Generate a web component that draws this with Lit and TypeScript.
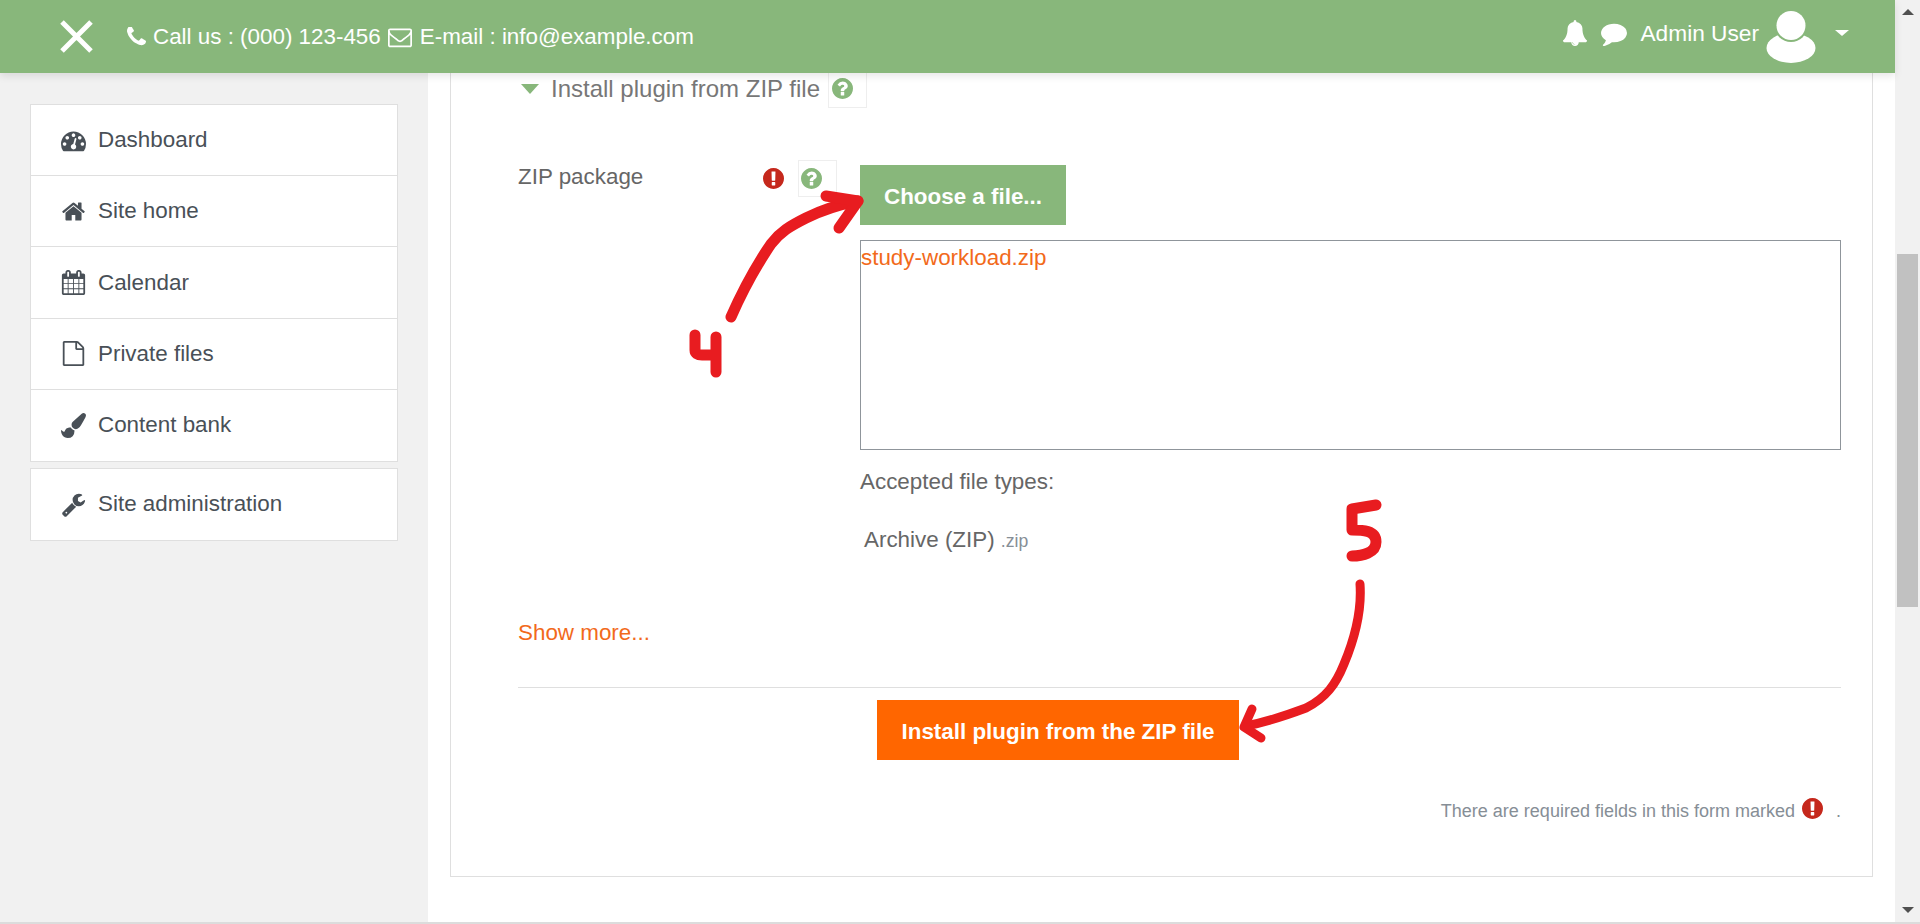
import { LitElement, html, css, svg } from "lit";
import { customElement } from "lit/decorators.js";

// font awesome 4 glyphs, all on the 1792 grid
const icons: Record<string, string> = {
  phone:
    "M1600 1240q0 27-10 70.5t-21 68.5q-21 50-122 106-94 51-186 51-27 0-53-3.5t-57.5-12.5-47-14.5-55.5-20.5-49-18q-98-35-175-83-127-79-264-216t-216-264q-48-77-83-175-3-9-18-49t-20.5-55.5-14.5-47-12.5-57.5-3.5-53q0-92 51-186 56-101 106-122 25-11 68.5-21t70.5-10q14 0 21 3 18 6 53 76 11 19 30 54t35 63.5 31 53.5q3 4 17.5 25t21.5 35.5 7 28.5q0 20-28.5 50t-62 55-62 53-28.5 46q0 9 5 22.5t8.5 20.5 14 24 11.5 19q76 137 174 235t235 174q2 1 19 11.5t24 14 20.5 8.5 22.5 5q18 0 46-28.5t53-62 55-62 50-28.5q14 0 28.5 7t35.5 21.5 25 17.5q25 15 53.5 31t63.5 35 54 30q70 35 76 53 3 7 3 21z",
  envelope:
    "M1664 1504v-768q-32 36-69 66-268 206-426 338-51 43-83 67t-86.5 48.5-102.5 24.5h-2q-48 0-102.5-24.5t-86.5-48.5-83-67q-158-132-426-338-37-30-69-66v768q0 13 9.5 22.5t22.5 9.5h1472q13 0 22.5-9.5t9.5-22.5zm0-1051v-24.5l-.5-13-3-12.5-5.5-9-9-7.5-14-2.5h-1472q-13 0-22.5 9.5t-9.5 22.5q0 168 147 284 193 152 401 317 6 5 35 29.5t46 37.5 44.5 31.5 50.5 27.5 43 9h2q20 0 43-9t50.5-27.5 44.5-31.5 46-37.5 35-29.5q208-165 401-317 54-43 100.5-115.5t46.5-131.5zm128-37v1088q0 66-47 113t-113 47h-1472q-66 0-113-47t-47-113v-1088q0-66 47-113t113-47h1472q66 0 113 47t47 113z",
  bell: "M912 1696q0-16-16-16-59 0-101.5-42.5t-42.5-101.5q0-16-16-16t-16 16q0 73 51.5 124.5t124.5 51.5q16 0 16-16zm816-288q0 52-38 90t-90 38h-448q0 106-75 181t-181 75-181-75-75-181h-448q-52 0-90-38t-38-90q50-42 91-88t85-119.5 74.5-158.5 50-206 19.5-260q0-152 117-282.5t307-158.5q-8-19-8-39 0-40 28-68t68-28 68 28 28 68q0 20-8 39 190 28 307 158.5t117 282.5q0 139 19.5 260t50 206 74.5 158.5 85 119.5 91 88z",
  comment:
    "M1792 896q0 174-120 321.5t-326 233-450 85.5q-70 0-145-8-198 175-460 242-49 14-114 22-17 2-30.5-9t-17.5-29v-1q-3-4-.5-12t2-10 4.5-9.5l6-9 7-8.5 8-9q7-8 31-34.5t34.5-38 31-39.5 32.5-51 27-59 26-76q-157-89-247.5-220t-90.5-281q0-130 71-248.5t191-204.5 286-136.5 348-50.5q244 0 450 85.5t326 233 120 321.5z",
  question:
    "M1024 1376v-192q0-14-9-23t-23-9h-192q-14 0-23 9t-9 23v192q0 14 9 23t23 9h192q14 0 23-9t9-23zm256-672q0-88-55.5-163t-138.5-116-170-41q-243 0-371 213-15 24 8 42l132 100q7 6 19 6 16 0 25-12 53-68 86-92 34-24 86-24 48 0 85.5 26t37.5 59q0 38-20 61t-68 45q-63 28-115.5 86.5t-52.5 125.5v36q0 14 9 23t23 9h192q14 0 23-9t9-23q0-19 21.5-49.5t54.5-49.5q32-18 49-28.5t46-35 44.5-48 28-60.5 12.5-81zm384 192q0 209-103 385.5t-279.5 279.5-385.5 103-385.5-103-279.5-279.5-103-385.5 103-385.5 279.5-279.5 385.5-103 385.5 103 279.5 279.5 103 385.5z",
  exclamation:
    "M896 128q209 0 385.5 103t279.5 279.5 103 385.5-103 385.5-279.5 279.5-385.5 103-385.5-103-279.5-279.5-103-385.5 103-385.5 279.5-279.5 385.5-103zm128 1247v-190q0-14-9-23.5t-22-9.5h-192q-13 0-23 10t-10 23v190q0 13 10 23t23 10h192q13 0 22-9.5t9-23.5zm-2-344l18-621q0-12-10-18-10-8-24-8h-220q-14 0-24 8-10 6-10 18l17 621q0 10 10 17.5t24 7.5h185q14 0 23.5-7.5t10.5-17.5z",
  dashboard:
    "M384 1152q0-53-37.5-90.5t-90.5-37.5-90.5 37.5-37.5 90.5 37.5 90.5 90.5 37.5 90.5-37.5 37.5-90.5zm192-448q0-53-37.5-90.5t-90.5-37.5-90.5 37.5-37.5 90.5 37.5 90.5 90.5 37.5 90.5-37.5 37.5-90.5zm428 481l101-382q6-26-7.5-48.5t-38.5-29.5-48 6.5-30 39.5l-101 382q-60 5-107 43.5t-63 98.5q-20 77 20 146t117 89 146-20 89-117q16-60-6-117t-72-91zm660-33q0-53-37.5-90.5t-90.5-37.5-90.5 37.5-37.5 90.5 37.5 90.5 90.5 37.5 90.5-37.5 37.5-90.5zm-640-640q0-53-37.5-90.5t-90.5-37.5-90.5 37.5-37.5 90.5 37.5 90.5 90.5 37.5 90.5-37.5 37.5-90.5zm448 192q0-53-37.5-90.5t-90.5-37.5-90.5 37.5-37.5 90.5 37.5 90.5 90.5 37.5 90.5-37.5 37.5-90.5zm320 448q0 261-141 483-19 29-54 29h-1402q-35 0-54-29-141-221-141-483 0-182 71-348t191-286 286-191 348-71 348 71 286 191 191 286 71 348z",
  home: "M1472 992v480q0 26-19 45t-45 19h-384v-384h-256v384h-384q-26 0-45-19t-19-45v-480q0-1 .5-3t.5-3l575-474 575 474q1 2 1 6zm223-69l-62 74q-8 9-21 11h-3q-13 0-21-7l-692-577-692 577q-12 8-24 7-13-2-21-11l-62-74q-8-10-7-23.5t11-21.5l719-599q32-26 76-26t76 26l244 204v-195q0-14 9-23t23-9h192q14 0 23 9t9 23v408l219 182q10 8 11 21.5t-7 23.5z",
  calendar:
    "M192 1664h288v-288h-288v288zm352 0h320v-288h-320v288zm-352-352h288v-320h-288v320zm352 0h320v-320h-320v320zm-352-384h288v-288h-288v288zm736 736h320v-288h-320v288zm-384-736h320v-288h-320v288zm768 736h288v-288h-288v288zm-384-352h320v-320h-320v320zm-352-864v-288q0-13-9.5-22.5t-22.5-9.5h-64q-13 0-22.5 9.5t-9.5 22.5v288q0 13 9.5 22.5t22.5 9.5h64q13 0 22.5-9.5t9.5-22.5zm736 864h288v-320h-288v320zm-384-384h320v-288h-320v288zm384 0h288v-288h-288v288zm32-480v-288q0-13-9.5-22.5t-22.5-9.5h-64q-13 0-22.5 9.5t-9.5 22.5v288q0 13 9.5 22.5t22.5 9.5h64q13 0 22.5-9.5t9.5-22.5zm384-64v1280q0 52-38 90t-90 38h-1408q-52 0-90-38t-38-90v-1280q0-52 38-90t90-38h128v-96q0-66 47-113t113-47h64q66 0 113 47t47 113v96h384v-96q0-66 47-113t113-47h64q66 0 113 47t47 113v96h128q52 0 90 38t38 90z",
  file: "M1596 380q28 28 48 76t20 88v1152q0 40-28 68t-68 28h-1344q-40 0-68-28t-28-68v-1600q0-40 28-68t68-28h896q40 0 88 20t76 48zm-444-244v376h376q-10-29-22-41l-313-313q-12-12-41-22zm384 1528v-1024h-416q-40 0-68-28t-28-68v-416h-768v1536h1280z",
  brush:
    "M1615 0q70 0 122.5 46.5t52.5 116.5q0 63-45 151-332 629-465 752-97 91-218 91-126 0-216.5-92.5t-90.5-219.5q0-128 92-212l638-579q59-54 130-54zm-909 1034q39 76 106.5 130t150.5 76l1 71q4 213-129.5 347t-348.5 134q-123 0-218-46.5t-152.5-127.5-86.5-183-29-220q7 5 41 30t62 44.5 59 36.5 46 17q41 0 55-37 25-66 57.5-112.5t69.5-76 88-47.5 103-25.5 125-10.5z",
  wrench:
    "M448 1472q0-26-19-45t-45-19-45 19-19 45 19 45 45 19 45-19 19-45zm644-420l-682 682q-37 37-90 37-52 0-91-37l-106-108q-38-36-38-90 0-53 38-91l681-681q39 98 114.5 173.5t173.5 114.5zm634-435q0 39-23 106-47 134-164.5 217.5t-258.5 83.5q-185 0-316.5-131.5t-131.5-316.5 131.5-316.5 316.5-131.5q58 0 121.5 16.5t107.5 46.5q16 11 16 28t-16 28l-293 169v224l193 107q5-3 79-48.5t135.5-81 70.5-35.5q15 0 23.5 10t8.5 25z",
};

const fa = (name: string, cls: string, box = "0 0 1792 1792") =>
  html`<svg class=${cls} viewBox=${box} fill="currentColor">
    ${svg`<path d=${icons[name]}></path>`}
  </svg>`;

const circleBox = "128 128 1536 1536";

const navTop = [
  ["dashboard", "Dashboard"],
  ["home", "Site home"],
  ["calendar", "Calendar"],
  ["file", "Private files"],
  ["brush", "Content bank"],
];

@customElement("app-root")
export class AppRoot extends LitElement {
  static styles = css`
    :host {
      display: flex;
      position: relative;
      height: 924px;
      box-sizing: border-box;
      border-bottom: 2px solid #dcdcdc;
      overflow: hidden;
      background: #fff;
      font-family: "Liberation Sans", Arial, sans-serif;
      font-size: 22.4px;
      color: #666;
    }
    .main {
      flex: 1;
      min-width: 0;
      display: flex;
      flex-direction: column;
    }

    /* top bar */
    .topbar {
      position: relative;
      z-index: 2;
      flex: none;
      height: 73px;
      display: flex;
      align-items: center;
      padding: 0 46px 0 60px;
      background: #88b77b;
      color: #fff;
      font-size: 22.4px;
      box-shadow: 0 3px 8px rgba(0, 0, 0, 0.1);
    }
    .close {
      width: 33px;
      height: 33px;
      margin-right: 34px;
    }
    .phone {
      width: 19px;
      height: 19px;
      margin-right: 7px;
    }
    .envelope {
      width: 24px;
      height: 24px;
      margin: 0 8px 0 7px;
    }
    .user {
      margin-left: auto;
      display: flex;
      align-items: center;
      padding-bottom: 7px;
    }
    .bell {
      width: 26px;
      height: 26px;
      margin-right: 13px;
    }
    .comment {
      width: 26px;
      height: 26px;
      margin-right: 13px;
    }
    .name {
      font-size: 22.7px;
    }
    .avatar {
      width: 50px;
      height: 52px;
      margin: 7px 0 0 7px;
    }
    .caret {
      width: 0;
      height: 0;
      margin-left: 19px;
      border: 7px solid transparent;
      border-top: 6px solid #fff;
      border-bottom: 0;
    }

    .body {
      flex: 1;
      min-height: 0;
      display: flex;
    }

    /* side menu */
    .side {
      flex: none;
      box-sizing: border-box;
      width: 428px;
      padding: 31px 30px 0 30px;
      background: #f1f1f1;
    }
    .menu {
      background: #fff;
      border: 1px solid #dfdfdf;
      margin-bottom: 6px;
      color: #495057;
    }
    .item {
      box-sizing: border-box;
      height: 71.4px;
      display: flex;
      align-items: center;
      padding-left: 30px;
      gap: 12px;
      border-top: 1px solid #dfdfdf;
    }
    .item:first-child {
      height: 70px;
      border-top: 0;
    }
    .menu + .menu .item {
      height: 71px;
    }
    .nav-icon {
      flex: none;
      width: 25px;
      height: 25px;
    }

    /* form card, its top edge runs under the bar */
    .content {
      flex: 1;
      min-width: 0;
      padding: 0 22px;
    }
    .card {
      box-sizing: border-box;
      height: 808px;
      margin-top: -4px;
      padding: 0 31px 0 67px;
      border: 1px solid #dfdfdf;
      border-top: 0;
    }
    .legend {
      display: flex;
      align-items: center;
      height: 39px;
      font-size: 24px;
      color: #777;
    }
    .tri {
      width: 0;
      height: 0;
      margin: 0 12px 0 3px;
      border: 9px solid transparent;
      border-top: 10px solid #88b77b;
      border-bottom: 0;
    }
    .help {
      box-sizing: border-box;
      flex: none;
      width: 39px;
      display: flex;
      align-items: center;
      border: 1px solid #eeeeee;
      color: #88b77b;
    }
    .legend .help {
      height: 39px;
      margin-left: 8px;
      padding-left: 2.5px;
    }
    .dot {
      width: 21px;
      height: 21px;
    }
    .row {
      display: grid;
      grid-template-columns: 342px 1fr;
      margin-top: 57px;
    }
    .label {
      display: flex;
      align-items: flex-start;
      margin-top: -5px;
      line-height: 33px;
    }
    .label span {
      width: 245px;
    }
    .req {
      color: #c5281c;
    }
    .label .req {
      margin-top: 7.5px;
    }
    .label .help {
      height: 37px;
      margin-left: 14px;
      padding: 0 0 1px 1.5px;
    }
    .btn {
      display: block;
      box-sizing: border-box;
      height: 60px;
      padding: 4px 24px 0;
      border: 0;
      color: #fff;
      font: bold 22.4px "Liberation Sans", Arial, sans-serif;
    }
    .btn-green {
      background: #88b77b;
    }
    .btn-orange {
      background: #ff6600;
      margin: 12px 0 0 359px;
      padding: 4px 24.5px 0;
    }
    .filebox {
      box-sizing: border-box;
      height: 210px;
      margin-top: 15px;
      padding-top: 2px;
      border: 1px solid #8f959b;
      line-height: 30px;
      color: #f26a1b;
    }
    .accepted {
      margin-top: 15px;
      line-height: 33px;
    }
    .archive {
      margin-top: 25px;
      padding-left: 4px;
      line-height: 33px;
    }
    .archive small {
      font-size: 17.6px;
      color: #868e96;
    }
    .more {
      margin-top: 58px;
      line-height: 33px;
      color: #f26a1b;
    }
    hr {
      margin: 38px 0 0;
      border: 0;
      border-top: 1px solid #dfdfdf;
    }
    .note {
      display: flex;
      justify-content: flex-end;
      align-items: center;
      margin-top: 36px;
      line-height: 30px;
      font-size: 18px;
      color: #868e96;
    }
    .note .req {
      margin: -6px 13px 0 7px;
    }

    /* fake scrollbar */
    .scroll {
      flex: none;
      width: 25px;
      box-sizing: border-box;
      display: flex;
      flex-direction: column;
      align-items: center;
      background: #f1f1f1;
    }
    .up,
    .down {
      width: 0;
      height: 0;
      border: 6px solid transparent;
    }
    .up {
      margin-top: 9px;
      border-top: 0;
      border-bottom: 6px solid #505050;
    }
    .thumb {
      width: 21px;
      height: 353px;
      margin-top: 239px;
      background: #c1c1c1;
    }
    .down {
      margin: auto 0 9px;
      border-bottom: 0;
      border-top: 6px solid #505050;
    }

    /* hand drawn annotations over the page */
    .marks {
      position: absolute;
      z-index: 3;
      top: 0;
      left: 0;
      pointer-events: none;
    }
  `;

  render() {
    return html`
      <div class="main">
        <header class="topbar">
          <svg class="close" viewBox="0 0 33 33">
            <path d="M2 2 31 31M31 2 2 31" stroke="#fff" stroke-width="5" fill="none"></path>
          </svg>
          ${fa("phone", "phone", "192 192 1408 1408")}
          <span>Call us : (000) 123-456</span>
          ${fa("envelope", "envelope")}
          <span>E-mail : info@example.com</span>
          <div class="user">
            ${fa("bell", "bell")} ${fa("comment", "comment")}
            <span class="name">Admin User</span>
            <svg class="avatar" viewBox="0 0 50 52">
              <ellipse cx="25" cy="37" rx="24.5" ry="15" fill="#fff"></ellipse>
              <circle cx="25" cy="14.5" r="16.5" fill="#88b77b"></circle>
              <circle cx="25" cy="14.5" r="14.5" fill="#fff"></circle>
            </svg>
            <span class="caret"></span>
          </div>
        </header>
        <div class="body">
          <aside class="side">
            <nav class="menu">
              ${navTop.map(
                ([icon, label]) =>
                  html`<div class="item">${fa(icon, "nav-icon")}<span>${label}</span></div>`
              )}
            </nav>
            <nav class="menu">
              <div class="item">${fa("wrench", "nav-icon")}<span>Site administration</span></div>
            </nav>
          </aside>
          <main class="content">
            <section class="card">
              <div class="legend">
                <span class="tri"></span>
                <span>Install plugin from ZIP file</span>
                <span class="help">${fa("question", "dot", circleBox)}</span>
              </div>
              <div class="row">
                <div class="label">
                  <span>ZIP package</span>
                  ${fa("exclamation", "dot req", circleBox)}
                  <div class="help">${fa("question", "dot", circleBox)}</div>
                </div>
                <div>
                  <button class="btn btn-green">Choose a file...</button>
                  <div class="filebox">study-workload.zip</div>
                  <div class="accepted">Accepted file types:</div>
                  <div class="archive">Archive (ZIP) <small>.zip</small></div>
                </div>
              </div>
              <div class="more">Show more...</div>
              <hr />
              <button class="btn btn-orange">Install plugin from the ZIP file</button>
              <div class="note">
                <span>There are required fields in this form marked</span>
                ${fa("exclamation", "dot req", circleBox)}
                <span>.</span>
              </div>
            </section>
          </main>
        </div>
      </div>
      <div class="scroll">
        <span class="up"></span>
        <span class="thumb"></span>
        <span class="down"></span>
      </div>
      <svg class="marks" width="1920" height="924" viewBox="0 0 1920 924" fill="none"
        stroke="#e81c20" stroke-linecap="round" stroke-linejoin="round">
        <g stroke-width="11">
          <path d="M731 317C742 292 756 266 771 244 780 232 790 226 806 218 822 210 842 204 858 201"></path>
          <path d="M826 196 858 201 839 228"></path>
          <path d="M695 335V350Q695 355 702 355H716M716 337V372"></path>
          <path d="M1376 505 1352 509 1352 530C1362 530 1376 530 1376 542 1376 553 1362 556 1352 556"></path>
        </g>
        <g stroke-width="9">
          <path d="M1360 584C1362 612 1354 640 1344 664 1336 684 1326 698 1306 708 1290 714 1266 722 1246 726"></path>
          <path d="M1252 709 1244 727 1261 738"></path>
        </g>
      </svg>
    `;
  }
}
